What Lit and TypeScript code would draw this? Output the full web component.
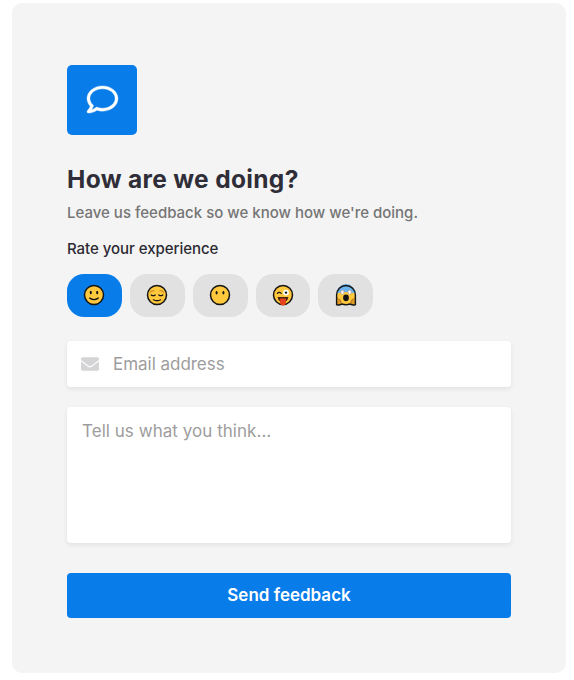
import { LitElement, html, svg, css } from "lit";
import { customElement, state } from "lit/decorators.js";
import { classMap } from "lit/directives/class-map.js";

const face = svg`<circle cx="11" cy="11" r="9.5" fill="#ffc83d" stroke="#151515" stroke-width="1.5"/>`;

const faces = [
  {
    name: "Happy",
    art: svg`${face}
      <ellipse cx="7.8" cy="8.6" rx="1.05" ry="1.8" fill="#151515"/>
      <ellipse cx="14.2" cy="8.6" rx="1.05" ry="1.8" fill="#151515"/>
      <path d="M6.8 14.1q4.2 3 8.4 0" fill="none" stroke="#151515" stroke-width="1.4" stroke-linecap="round"/>`,
  },
  {
    name: "Relieved",
    art: svg`${face}
      <path d="M4 8.3q1.8-2 4.2-1.7M18 8.3q-1.8-2-4.2-1.7" fill="none" stroke="#d29425" stroke-width="1.2" stroke-linecap="round"/>
      <path d="M5.2 10.9q2 1.6 4 0M12.8 10.9q2 1.6 4 0M7.4 15.8q3.6 1.9 7.2 0" fill="none" stroke="#151515" stroke-width="1.25" stroke-linecap="round"/>`,
  },
  {
    name: "Speechless",
    art: svg`${face}
      <ellipse cx="7.6" cy="8.7" rx="1.05" ry="1.7" fill="#151515"/>
      <ellipse cx="14.4" cy="8.7" rx="1.05" ry="1.7" fill="#151515"/>`,
  },
  {
    name: "Playful",
    art: svg`${face}
      <path d="M5.3 9.4q1.8-2 4 0" fill="none" stroke="#151515" stroke-width="1.1" stroke-linecap="round"/>
      <circle cx="14" cy="8.6" r="2.9" fill="#fff"/>
      <circle cx="14" cy="8.6" r="1.2" fill="#151515"/>
      <path d="M5.6 13h10.8q-.5 5-5.4 5t-5.4-5z" fill="#4a2414"/>
      <path d="M8.1 14.4h5.8v4.3a2.9 2.7 0 0 1-5.8 0z" fill="#e8401c"/>`,
  },
  {
    name: "Shocked",
    art: svg`
      <circle cx="11" cy="11" r="9.5" fill="#ffc83d"/>
      <path d="M1.5 9.6a9.5 9.5 0 0 1 19 0q-4-1.6-9.5-1.6t-9.5 1.6z" fill="#6cb4ee"/>
      <path d="M1.6 13.3q2.7 0 3.6 3l2 4.5H1.6zM20.4 13.3q-2.7 0-3.6 3l-2 4.5h5.6z" fill="#dd9a24"/>
      <path d="M7 20q-3.4 1.7-5.4.6V11a9.4 9.5 0 0 1 18.8 0v9.6q-2 1.1-5.4-.6-4 1.4-8 0z" fill="none" stroke="#151515" stroke-width="1.4"/>
      <path d="M4.6 15l2 4.6M17.4 15l-2 4.6" stroke="#8a5a14" stroke-width=".7"/>
      <rect x="5.9" y="6.2" width="3" height="4.2" rx="1.3" fill="#fff" stroke="#a98f80" stroke-width=".6"/>
      <rect x="13.1" y="6.2" width="3" height="4.2" rx="1.3" fill="#fff" stroke="#a98f80" stroke-width=".6"/>
      <ellipse cx="11" cy="13.8" rx="2.9" ry="3.4" fill="#151515"/>`,
  },
];

@customElement("app-root")
export class AppRoot extends LitElement {
  @state() private selected = 0;

  static styles = css`
    :host {
      display: block;
      height: 680px;
      overflow: hidden;
      background: #fff;
      padding: 3px 8px 0 12px;
      box-sizing: border-box;
      font-family: Inter, "Liberation Sans", sans-serif;
    }
    * { box-sizing: border-box; }
    .card {
      height: 670px;
      padding: 62px 55px 55px;
      border-radius: 10px;
      background: #f4f4f4;
      display: flex;
      flex-direction: column;
    }
    .logo {
      width: 70px;
      height: 70px;
      flex: none;
      padding-bottom: 1px;
      border-radius: 5px;
      background: #087ce9;
      display: grid;
      place-items: center;
    }
    .logo svg {
      width: 31px;
      height: 31px;
      fill: #fff;
      stroke: #fff;
      stroke-width: 6px;
      overflow: visible;
    }
    h1, p { margin: 0; white-space: nowrap; }
    h1 {
      margin-top: 27px;
      font-size: 24.5px;
      line-height: 34px;
      font-weight: 700;
      letter-spacing: 0.33px;
      color: #2f2e38;
    }
    .lead {
      margin-top: 6px;
      font-size: 15px;
      line-height: 22px;
      font-weight: 500;
      color: #757575;
    }
    .label {
      margin-top: 14px;
      font-size: 15px;
      line-height: 22px;
      font-weight: 500;
      letter-spacing: -0.04px;
      color: #2b2a33;
    }
    .faces { display: flex; gap: 8px; margin-top: 14px; height: 43px; }
    .face {
      width: 54.86px;
      padding: 0 0 2px;
      border: 0;
      border-radius: 17px;
      background: #e1e1e1;
      display: grid;
      place-items: center;
    }
    .face.on { background: #087ce9; }
    .face svg { width: 22px; height: 22px; display: block; }
    .field {
      margin-top: 24px;
      height: 46px;
      padding-left: 14px;
      display: flex;
      align-items: center;
      gap: 14px;
    }
    .field svg { width: 18px; height: 18px; fill: #d4d4d6; flex: none; }
    .field, textarea {
      background: #fff;
      border-radius: 4px;
      box-shadow: 0 2px 5px rgba(0, 0, 0, 0.08);
    }
    input, textarea {
      font: 400 17px/24px Inter, "Liberation Sans", sans-serif;
      border: 0;
      outline: 0;
      color: #2b2a33;
    }
    input { flex: 1; min-width: 0; padding: 0; background: none; letter-spacing: -0.03px; }
    textarea {
      margin-top: 20px;
      height: 136px;
      padding: 12px 15px;
      resize: none;
      display: block;
      letter-spacing: 0.04px;
    }
    ::placeholder { color: #9d9d9d; opacity: 1; }
    .send {
      margin-top: 30px;
      height: 45px;
      padding: 0 0 1px;
      border: 0;
      border-radius: 4px;
      background: #087ce9;
      color: #fff;
      font: 600 17px/24px Inter, "Liberation Sans", sans-serif;
    }
  `;

  render() {
    return html`<div class="card">
      <div class="logo">
        <svg viewBox="0 0 512 512"><path d="M256 32C114.6 32 0 125.1 0 240c0 47.6 19.9 91.2 52.9 126.3C38 405.7 7 439.1 6.5 439.5c-6.6 7-8.4 17.2-4.6 26S14.4 480 24 480c61.5 0 110-25.7 139.1-46.3C192 442.8 223.2 448 256 448c141.4 0 256-93.1 256-208S397.4 32 256 32zm0 368c-26.7 0-53.1-4.1-78.4-12.1l-22.7-7.2-19.5 13.8c-14.3 10.1-33.9 21.4-57.5 29 7.3-12.1 14.4-25.7 19.9-40.2l10.6-28.1-20.6-21.8C69.7 314.1 48 282.2 48 240c0-88.2 93.3-160 208-160s208 71.8 208 160-93.3 160-208 160z"/></svg>
      </div>
      <h1>How are we doing?</h1>
      <p class="lead">Leave us feedback so we know how we're doing.</p>
      <p class="label">Rate your experience</p>
      <div class="faces">
        ${faces.map((f, i) => html`<button
          class=${classMap({ face: true, on: i === this.selected })}
          aria-label=${f.name}
          @click=${() => (this.selected = i)}
        ><svg viewBox="0 0 22 22">${f.art}</svg></button>`)}
      </div>
      <label class="field">
        <svg viewBox="0 0 512 512"><path d="M502.3 190.8c3.9-3.1 9.7-.2 9.7 4.7V400c0 26.5-21.5 48-48 48H48c-26.5 0-48-21.5-48-48V195.6c0-5 5.7-7.8 9.7-4.7 22.4 17.4 52.1 39.5 154.1 113.6 21.1 15.4 56.7 47.8 92.2 47.6 35.7.3 72-32.8 92.3-47.6 102-74.1 131.6-96.3 154-113.7zM256 320c23.2.4 56.6-29.2 73.4-41.4 132.7-96.3 142.8-104.7 173.4-128.7 5.8-4.5 9.2-11.5 9.2-18.9v-19c0-26.5-21.5-48-48-48H48c-26.5 0-48 21.5-48 48v19c0 7.4 3.4 14.3 9.2 18.9 30.6 23.9 40.7 32.4 173.4 128.7 16.8 12.2 50.2 41.8 73.4 41.4z"/></svg>
        <input type="email" placeholder="Email address" />
      </label>
      <textarea placeholder="Tell us what you think..."></textarea>
      <button class="send">Send feedback</button>
    </div>`;
  }
}
